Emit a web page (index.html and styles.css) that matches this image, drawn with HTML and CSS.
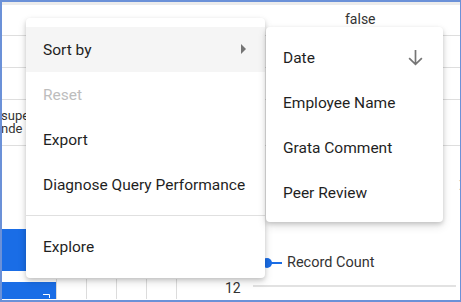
FILE: index.html
```html
<!DOCTYPE html>
<html lang="en">
<head>
  <meta charset="UTF-8">
  <title>Sort menu</title>
  <meta name="viewport" content="width=device-width, initial-scale=1.0">
  <link rel="stylesheet" href="styles.css">
</head>
<body>
  <div class="frame">
    <div class="topbar"></div>
    <div class="row row-a"><span class="cell-false">false</span></div>
    <div class="row row-b"></div>
    <div class="row row-c"></div>
    <div class="row row-d"><span class="cell-clip">supe<br>nde</span></div>
    <div class="chart">
      <div class="bar"></div>
      <div class="legend">
        <span class="legend-mark"><span class="dot"></span><span class="stem"></span></span>
        <span>Record Count</span>
      </div>
      <span class="next">&#8250;</span>
    </div>
    <div class="axis">
      <div class="axis-bar">
        <svg width="8" height="4" viewBox="0 0 8 4"><path d="M0 0.5H6.5V4" fill="none" stroke="#fff" stroke-width="1"/></svg>
      </div>
      <div class="axis-cell"></div>
      <div class="axis-cell"></div>
      <div class="axis-cell"></div>
      <div class="axis-cell"></div>
      <div class="axis-cell axis-wide"><span class="tick">12</span></div>
      <div class="axis-line"></div>
    </div>

    <div class="menu main-menu">
      <div class="item active">
        <span>Sort by</span>
        <svg class="caret" width="6" height="10" viewBox="0 0 6 10"><path d="M0 0L5 5L0 10Z" fill="#757575"/></svg>
      </div>
      <div class="item disabled">Reset</div>
      <div class="item">Export</div>
      <div class="item">Diagnose Query Performance</div>
      <div class="divider"></div>
      <div class="item">Explore</div>
    </div>

    <div class="menu sub-menu">
      <div class="item">
        <span>Date</span>
        <svg class="sort-icon" width="17" height="17" viewBox="0 0 16 16"><path d="M8 1V14.5M2 8.5L8 14.5L14 8.5" fill="none" stroke="#757575" stroke-width="1.6"/></svg>
      </div>
      <div class="item">Employee Name</div>
      <div class="item">Grata Comment</div>
      <div class="item">Peer Review</div>
    </div>
  </div>
</body>
</html>
```

FILE: styles.css
```css
*{box-sizing:border-box;margin:0;padding:0;}
body{
  font-family:Roboto,"Noto Sans",Arial,sans-serif;
  background:#fff;
  color:#202124;
}
.frame{
  position:relative;
  width:461px;
  height:302px;
  border:2px solid #6b91d8;
  border-right-width:1px;
  overflow:hidden;
  background:#fff;
}
.topbar{height:3px;background:#ececec;}
.row{border-bottom:1px solid #dedede;position:relative;}
.row-a{height:31px;}
.row-b{height:32px;}
.row-c{height:32px;}
.row-d{height:46px;}
.cell-false{
  position:absolute;
  left:343px;
  top:6px;
  font-size:14px;
  color:#333;
}
.cell-clip{
  position:absolute;
  left:-1px;
  top:9px;
  font-size:13px;
  line-height:13px;
  color:#333;
}
.chart{
  height:136px;
  padding-top:83px;
  position:relative;
}
.bar{
  width:24px;
  height:42px;
  background:#1a6de6;
}
.legend{
  position:absolute;
  left:260px;
  top:108px;
  display:flex;
  align-items:center;
  gap:5px;
  font-size:14.5px;
  color:#333;
}
.legend-mark{display:flex;align-items:center;}
.dot{width:10px;height:10px;border-radius:50%;background:#1a6de6;}
.stem{width:12px;height:2px;background:#1a6de6;margin-left:-2px;}
.next{
  position:absolute;
  right:-6px;
  top:22px;
  font-size:26px;
  line-height:30px;
  color:#9e9e9e;
}
.axis{
  display:flex;
  height:17px;
  position:relative;
}
.axis-bar{
  width:54px;
  background:#1a6de6;
  display:flex;
  align-items:flex-end;
  justify-content:flex-end;
  padding:0 5px 1px 0;
}
.axis-cell{width:30px;border-left:1px solid #dcdcdc;margin-top:-3px;}
.axis-wide{width:auto;border-left:1px solid #dcdcdc;padding-left:48px;}
.tick{font-size:14px;color:#333;line-height:17px;display:block;margin-top:1px;}
.axis-line{
  flex:1;
  height:2px;
  background:#e2e2e2;
  margin:3px 4px 0 12px;
}
.menu{
  position:absolute;
  background:#fff;
  border-radius:4px;
  box-shadow:0 2px 4px rgba(0,0,0,.16),0 4px 10px rgba(0,0,0,.12);
  font-size:15.5px;
}
.main-menu{
  left:24px;
  top:16px;
  width:239px;
  padding:9px 0;
}
.sub-menu{
  left:264px;
  top:25px;
  width:177px;
  padding:8px 0 7px;
}
.item{
  height:45px;
  display:flex;
  align-items:center;
  justify-content:space-between;
  padding:0 19px 0 17px;
  color:#1f1f1f;
  white-space:nowrap;
}
.item.active{background:#f5f5f5;}
.item.disabled{color:#bdbdbd;}
.main-menu .item{padding-right:18px;}
.caret{margin-top:-1px;}
.divider{height:1px;background:#e0e0e0;margin:8px 0;}
```
